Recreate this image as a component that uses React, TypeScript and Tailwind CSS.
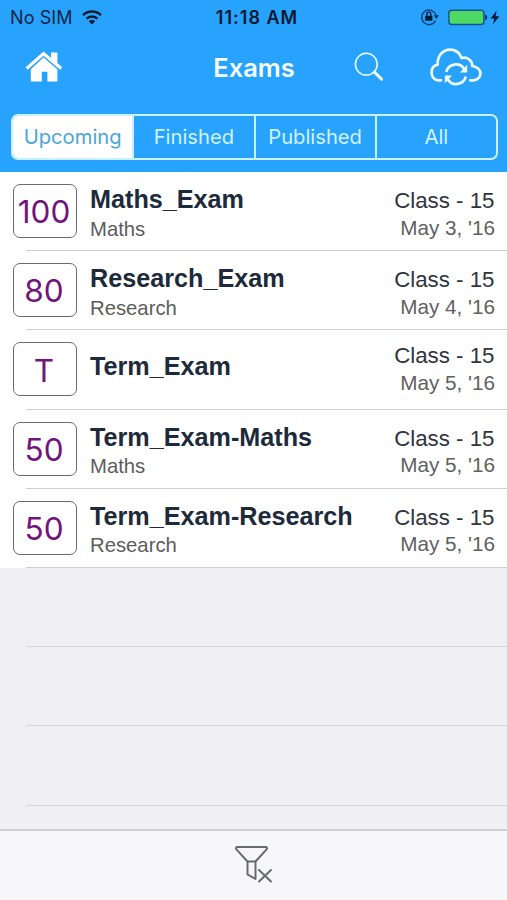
import { useState } from 'react';

interface Exam {
  id: number;
  mark: string;
  title: string;
  subject?: string;
  className: string;
  date: string;
}

const TABS = ['Upcoming', 'Finished', 'Published', 'All'];

const EXAMS: Exam[] = [
  { id: 1, mark: '100', title: 'Maths_Exam', subject: 'Maths', className: 'Class - 15', date: "May 3, '16" },
  { id: 2, mark: '80', title: 'Research_Exam', subject: 'Research', className: 'Class - 15', date: "May 4, '16" },
  { id: 3, mark: 'T', title: 'Term_Exam', className: 'Class - 15', date: "May 5, '16" },
  { id: 4, mark: '50', title: 'Term_Exam-Maths', subject: 'Maths', className: 'Class - 15', date: "May 5, '16" },
  { id: 5, mark: '50', title: 'Term_Exam-Research', subject: 'Research', className: 'Class - 15', date: "May 5, '16" },
];

function StatusBar() {
  return (
    <div className="grid h-[34px] grid-cols-[1fr_auto_1fr] items-center pl-[10px] pr-[7px] text-[#0b2545]">
      <div className="flex items-center gap-[9px]">
        <span className="pt-[2px] text-[18px] leading-none tracking-[0.1px]">No SIM</span>
        <svg width="20" height="15" viewBox="0 0 20 15" fill="none" stroke="#061a33" strokeWidth="2.5">
          <path d="M1 5.2C6 .4 14 .4 19 5.2" />
          <path d="M4.4 8.7c3.2-3 8-3 11.2 0" />
          <path d="M10 14.4 6.8 11.2c1.8-1.7 4.6-1.7 6.4 0z" fill="#061a33" stroke="none" />
        </svg>
      </div>
      <span className="pl-[4px] pt-[2px] text-[18px] font-semibold leading-none tracking-[1px] text-[#06182f]">
        11:18 AM
      </span>
      <div className="flex items-center justify-end">
        <svg width="20" height="18" viewBox="0 0 20 18" fill="none">
          <path d="M15.6 12.6A7.3 7.3 0 1 1 16 7" stroke="#10467c" strokeWidth="1.5" />
          <path d="M13.7 7.2h5.2l-2.6 3.6z" fill="#0b2545" />
          <rect x="5.2" y="7.8" width="7.2" height="5" rx=".6" fill="#061a33" />
          <path d="M6.8 8V6.200a2 2 0 0 1 4 0V8" stroke="#061a33" strokeWidth="1.3" />
        </svg>
        <svg className="ml-[8px]" width="40" height="17" viewBox="0 0 40 17">
          <rect x=".9" y="1.2" width="35" height="14.4" rx="2.8" fill="#4cd964" stroke="#14568c" strokeWidth="1.5" />
          <path d="M37.2 5.6c2.6.6 2.6 5 0 5.6z" fill="#0b2545" />
        </svg>
        <svg className="ml-[2px]" width="10" height="15" viewBox="0 0 10 15" fill="#061a33">
          <path d="M6.6.6.6 8.4h3.6L3 14.2l6.4-8H5.6z" />
        </svg>
      </div>
    </div>
  );
}

function HomeIcon() {
  return (
    <svg width="38" height="32" viewBox="0 0 38 32" fill="#fff">
      <path d="M18.500.5 26 6.800V1.400H32.400v10.600l4.800 4.300-2 2.500L18.500 4.700 2.600 18.800.6 16.300z" />
      <path d="M18.500 6.600 32.400 18.200V30.400h-10v-9.600h-5.600v9.600H5.800V18.200z" />
    </svg>
  );
}

function SearchIcon() {
  return (
    <svg width="30" height="30" viewBox="0 0 30 30" fill="none" stroke="#eefbff">
      <circle cx="12.3" cy="12.2" r="10.9" strokeWidth="1.5" />
      <path d="m20.4 20.2 7.2 7" strokeWidth="3" strokeLinecap="round" />
    </svg>
  );
}

function CloudSyncIcon() {
  return (
    <svg width="54" height="40" viewBox="0 0 54 40" fill="none" stroke="#eefbff" strokeWidth="2.7">
      <path
        d="M12 33.400H9.400C5.200 33 2.600 29.600 2.600 25.400c0-4.200 2.400-7 6-7.800C8.200 9 13.600 2.600 21 2.600c6 0 9.800 3.400 11.600 8.400 5.600-1.400 10.400 2 10.800 8 4.600 1 8 3.600 8 7.600 0 3.800-3.200 6.600-7.200 6.800h-3"
        strokeLinecap="round"
      />
      <path d="M17.200 24.800A10 10 0 0 1 35.300 22.200" />
      <path d="M36.800 29.600A10 10 0 0 1 18.600 32.200" />
      <path d="M38.200 17.800v7.600h-7.400zM15.800 36.200v-7.600h7.400z" fill="#eefbff" stroke="none" />
    </svg>
  );
}

function FilterClearIcon() {
  return (
    <svg width="39" height="40" viewBox="0 0 39 40" fill="none" stroke="#666a73" strokeWidth="2" strokeLinejoin="round">
      <path d="M2 3.200c0-.800.500-1.200 1.200-1.200h28.600c.700 0 1.200.400 1.200 1.200 0 .600-.200 1-.600 1.400L21.500 16.500v17.500l-8-4.600V16.500L2.600 4.600C2.200 4.200 2 3.800 2 3.200z" />
      <path d="M13.500 16.500h8" />
      <path d="m25 25 12 11.500M37 25l-12 11.500" strokeLinecap="round" />
    </svg>
  );
}

function ExamRow({ exam }: { exam: Exam }) {
  return (
    <li className="flex h-[79.2px] bg-white pl-[13px] font-['Liberation_Sans',Arial,sans-serif]">
      <div className="mt-[12px] flex h-[54px] w-[64px] shrink-0 items-center justify-center rounded-[7px] border-[1.5px] border-[#6b6b6b] pr-[2px] pt-[2px] font-['Inter',sans-serif] text-[31.5px] font-normal leading-none text-[#72147c]">
        {exam.mark}
      </div>
      <div className="relative flex flex-1 pl-[13px] pr-[12px]">
        <div className={`flex-1 whitespace-nowrap ${exam.subject ? 'pt-[12px]' : 'pt-[20.5px]'}`}>
          <h2 className="text-[25.2px] font-bold leading-[30px] text-[#1d2a3b]">{exam.title}</h2>
          {exam.subject && <p className="mt-[2.5px] text-[20.3px] leading-[24px] text-[#5c5c5c]">{exam.subject}</p>}
        </div>
        <div className={`whitespace-nowrap text-right ${exam.subject ? 'pt-[15px]' : 'pt-[12px]'}`}>
          <p className="pr-[0.5px] text-[22.3px] leading-[28px] text-[#30343c]">{exam.className}</p>
          <p className="mt-[0.5px] text-[20.7px] leading-[24px] text-[#606060]">{exam.date}</p>
        </div>
        <span className="absolute -left-[51px] bottom-0 right-0 h-px bg-[#cfcfd3]" />
      </div>
    </li>
  );
}

export default function App() {
  const [tab, setTab] = useState('Upcoming');

  return (
    <div className="flex h-[900px] w-[507px] flex-col overflow-hidden bg-[#efeff4] font-['Inter',sans-serif]">
      <header className="h-[172px] shrink-0 bg-[#27a3fd]">
        <StatusBar />
        <div className="grid h-[66px] grid-cols-[1fr_auto_1fr] items-center pl-[25px] pr-[24px]">
          <button className="justify-self-start">
            <HomeIcon />
          </button>
          <h1 className="pt-[2px] text-[25.5px] font-semibold text-[#f4fcff]">Exams</h1>
          <div className="flex items-center justify-end gap-[45px]">
            <SearchIcon />
            <CloudSyncIcon />
          </div>
        </div>
        <div className="ml-[11px] mr-[9px] mt-[14px] flex h-[46px] divide-x-2 divide-[#c9f1ff] overflow-hidden rounded-[7px] border-2 border-[#c9f1ff]">
          {TABS.map((name) => (
            <button
              key={name}
              onClick={() => setTab(name)}
              className={`flex-1 basis-0 pt-px text-[20.2px] ${
                tab === name ? 'bg-white text-[#4aa5d8]' : 'text-[#d0f3ff]'
              }`}
            >
              {name}
            </button>
          ))}
        </div>
      </header>

      <ul className="flex-1 overflow-hidden">
        {EXAMS.map((exam) => (
          <ExamRow key={exam.id} exam={exam} />
        ))}
        {/* empty table rows */}
        {[0, 1, 2].map((i) => (
          <li key={i} className="ml-[26px] h-[79.2px] border-b border-[#d6d6da]" />
        ))}
      </ul>

      <footer className="flex h-[71px] shrink-0 items-start justify-center border-t-2 border-[#cfcfd4] bg-[#f7f7fa] pt-[14px]">
        <button>
          <FilterClearIcon />
        </button>
      </footer>
    </div>
  );
}
